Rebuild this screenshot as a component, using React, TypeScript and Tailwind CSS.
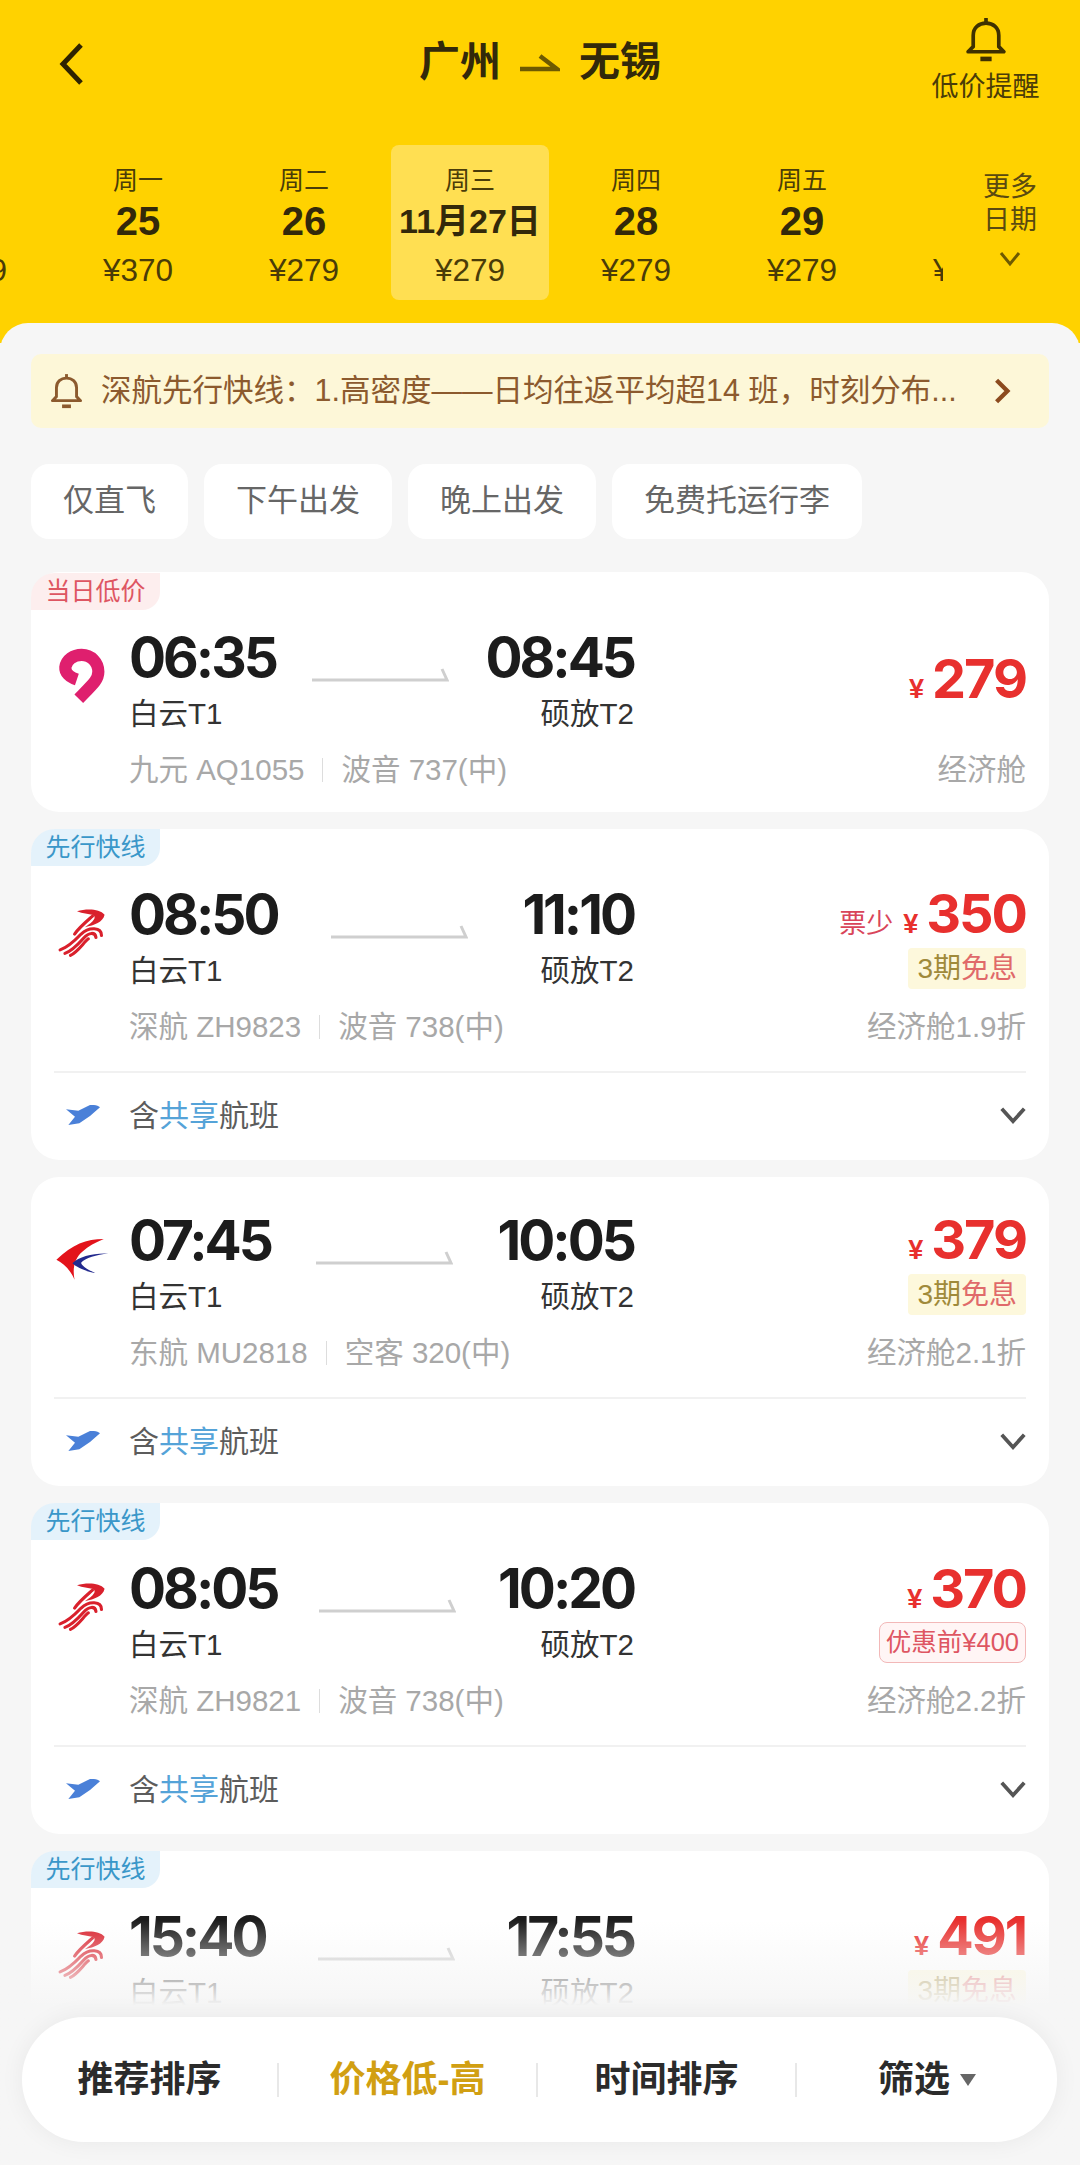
const DAYS = [
  { week: '周日', day: '24', price: '¥279' },
  { week: '周一', day: '25', price: '¥370' },
  { week: '周二', day: '26', price: '¥279' },
  { week: '周三', day: '11月27日', price: '¥279', active: true },
  { week: '周四', day: '28', price: '¥279' },
  { week: '周五', day: '29', price: '¥279' },
  { week: '周六', day: '30', price: '¥279' },
];

const CHIPS = ['仅直飞', '下午出发', '晚上出发', '免费托运行李'];

type Flight = {
  tag?: 'low' | 'fast';
  logo: 'nine' | 'shenzhen' | 'eastern';
  dep: string;
  arr: string;
  airline: string;
  plane: string;
  price: string;
  scarce?: boolean;
  badge?: 'free' | 'before';
  cabin: string;
  shared?: boolean;
};

const FLIGHTS: Flight[] = [
  { tag: 'low', logo: 'nine', dep: '06:35', arr: '08:45', airline: '九元 AQ1055', plane: '波音 737(中)', price: '279', cabin: '经济舱' },
  { tag: 'fast', logo: 'shenzhen', dep: '08:50', arr: '11:10', airline: '深航 ZH9823', plane: '波音 738(中)', price: '350', scarce: true, badge: 'free', cabin: '经济舱1.9折', shared: true },
  { logo: 'eastern', dep: '07:45', arr: '10:05', airline: '东航 MU2818', plane: '空客 320(中)', price: '379', badge: 'free', cabin: '经济舱2.1折', shared: true },
  { tag: 'fast', logo: 'shenzhen', dep: '08:05', arr: '10:20', airline: '深航 ZH9821', plane: '波音 738(中)', price: '370', badge: 'before', cabin: '经济舱2.2折', shared: true },
  { tag: 'fast', logo: 'shenzhen', dep: '15:40', arr: '17:55', airline: '深航 ZH9825', plane: '波音 738(中)', price: '491', badge: 'free', cabin: '经济舱2.9折', shared: true },
];

function BellIcon({ className, stroke }: { className: string; stroke: string }) {
  return (
    <svg viewBox="0 0 41 44" className={className} fill="none" stroke={stroke} strokeWidth="3.6" strokeLinejoin="round">
      <path d="M20.5 1v5" />
      <path d="M8 29V18C8 10.500 13.500 6 20.500 6S33 10.500 33 18v11l5 5H3z" />
      <path d="M15 41h11" strokeWidth="4.500" />
    </svg>
  );
}

function NineLogo() {
  return (
    <svg viewBox="80 70 156 186" className="w-[50px] h-[60px]">
      <path d="M142 174C118 166 105 152 106 136C109 112 132 97 157 97C186 97 209 120 209 150C209 174 195 186 148 234" fill="none" stroke="#df1f6e" strokeWidth="38" />
    </svg>
  );
}

function ShenzhenLogo() {
  return (
    <svg viewBox="85 50 145 150" className="w-[50px] h-[52px]">
      <path d="M143 62C170 54 208 54 223 72C218 94 194 102 166 108C192 92 200 80 190 73C175 69 160 69 143 62Z" fill="#d9202c" />
      <g fill="none" stroke="#d9202c" strokeLinecap="round">
        <path d="M188 76C170 92 150 108 136 128" strokeWidth="9" />
        <path d="M214 132C214 108 178 106 155 128C136 148 118 166 94 174" strokeWidth="9" />
        <path d="M198 138C196 122 178 122 162 140C146 158 130 176 108 184" strokeWidth="9" />
        <path d="M176 142C162 152 148 178 124 190" strokeWidth="9" />
      </g>
    </svg>
  );
}

function EasternLogo() {
  return (
    <svg viewBox="80 80 155 125" className="w-[54px] h-[44px]">
      <path d="M220 85C170 85 130 100 84 145C105 155 125 175 136 202C130 170 135 140 160 120C175 106 196 95 220 85Z" fill="#e3131b" />
      <path d="M233 127C190 125 150 135 130 155C142 166 165 178 196 183C170 171 156 161 155 153C166 140 200 131 233 127Z" fill="#232a8e" />
    </svg>
  );
}

function PlaneIcon() {
  return (
    <svg viewBox="78 45 102 60" className="w-[36px] h-[20px]">
      <path d="M78 58L115 62L150 45C162 44 175 46 180 52L150 78L118 100L85 105L105 80Z" fill="#4a80d8" />
    </svg>
  );
}

function FlightArrow() {
  return (
    <svg viewBox="0 0 137 16" className="w-[137px] h-[16px] mt-[42px] shrink-0" fill="none">
      <path d="M0 14H135L130 3" stroke="#cfcfcf" strokeWidth="3" />
    </svg>
  );
}

function Chevron({ className, stroke, points, width = 3 }: { className: string; stroke: string; points: string; width?: number }) {
  return (
    <svg viewBox="0 0 24 24" className={className} fill="none" stroke={stroke} strokeWidth={width}>
      <polyline points={points} />
    </svg>
  );
}

function FlightCard({ flight }: { flight: Flight }) {
  return (
    <div className="relative bg-white rounded-[28px] shrink-0">
      {flight.tag === 'low' && (
        <div className="absolute left-0 top-px h-[37px] w-[129px] flex items-center justify-center rounded-tl-[24px] rounded-br-[18px] bg-[#fdeeee] text-[25px] text-[#de5662]">
          当日低价
        </div>
      )}
      {flight.tag === 'fast' && (
        <div className="absolute left-0 top-0 h-[37px] w-[129px] flex items-center justify-center rounded-tl-[24px] rounded-br-[18px] bg-[#e4f2fb] text-[25px] text-[#3a97c9]">
          先行快线
        </div>
      )}

      <div className={`flex pb-[24px] pr-[23px] ${flight.tag ? 'pt-[52px]' : 'pt-[30px]'}`}>
        <div className="w-[98px] shrink-0 h-[104px] flex items-center justify-center pl-[4px]">
          {flight.logo === 'nine' && <NineLogo />}
          {flight.logo === 'shenzhen' && <ShenzhenLogo />}
          {flight.logo === 'eastern' && <EasternLogo />}
        </div>

        <div className="w-[505px] shrink-0">
          <div className="flex justify-between items-start h-[66px] font-['Inter',sans-serif] text-[55px] tracking-[-3px] leading-[66px] font-bold text-[#1c1c1c]">
            <span>{flight.dep}</span>
            <FlightArrow />
            <span>{flight.arr}</span>
          </div>
          <div className="flex justify-between mt-[6px] h-[36px] text-[29.5px] leading-[36px] text-[#333333]">
            <span>白云T1</span>
            <span>硕放T2</span>
          </div>
          <div className="flex items-center mt-[20px] h-[36px] text-[29.5px] leading-[36px] text-[#a8a8a8]">
            <span>{flight.airline}</span>
            <span className="w-px h-[24px] bg-[#dddddd] mx-[18px]" />
            <span>{flight.plane}</span>
          </div>
        </div>

        <div className="flex-1 flex flex-col items-end">
          <div className="h-[110px] flex flex-col items-end justify-center">
            <div className="flex items-baseline h-[62px] leading-[62px] text-[#e8302e]">
              {flight.scarce && <span className="text-[27px] text-[#d9455a] mr-[10px]">票少</span>}
              <span className="text-[27px] font-bold mr-[8px]">¥</span>
              <span className="font-['Inter',sans-serif] text-[54px] tracking-[-2px] font-bold">{flight.price}</span>
            </div>
            {flight.badge === 'free' && (
              <div className="mt-[3px] h-[41px] px-[9px] flex items-center bg-[#fdf8dc] rounded-[4px] text-[28px]">
                <span className="text-[#a08a3a]">3期</span>
                <span className="text-[#e06a6a]">免息</span>
              </div>
            )}
            {flight.badge === 'before' && (
              <div className="mt-[2px] h-[41px] px-[6px] flex items-center bg-[#fff5f5] border border-[#f2b8b8] rounded-[8px] text-[25.5px] text-[#de5662]">
                优惠前¥400
              </div>
            )}
          </div>
          <div className="mt-[18px] h-[36px] text-[29.5px] leading-[36px] text-[#a8a8a8]">{flight.cabin}</div>
        </div>
      </div>

      {flight.shared && (
        <div className="mx-[23px] mt-[2px] border-t-2 border-[#f1f1f1] h-[89px] flex items-center pb-[3px]">
          <div className="w-[75px] pl-[11px] shrink-0">
            <PlaneIcon />
          </div>
          <span className="text-[30px] text-[#5c5c5c]">
            含<span className="text-[#55a3d8]">共享</span>航班
          </span>
          <Chevron className="ml-auto w-[30px] h-[30px] -mr-[2px]" stroke="#555555" points="3,7 12,17 21,7" />
        </div>
      )}
    </div>
  );
}

export default function App() {
  return (
    <div className="relative h-[2165px] overflow-hidden bg-[#f6f6f6] font-['Liberation_Sans','Noto_Sans_CJK_SC',sans-serif]">
      {/* Header */}
      <div className="h-[343px] bg-[#ffd200] pt-[17px]">
        <div className="grid grid-cols-[1fr_auto_1fr] h-[128px]">
          <div className="pl-[58px] pt-[26px]">
            <svg viewBox="0 0 26 42" className="w-[26px] h-[42px]" fill="none" stroke="#2e2300" strokeWidth="5">
              <polyline points="23,2 5,21 23,40" />
            </svg>
          </div>
          <div className="flex items-center h-[92px] text-[41px] font-bold text-[#33290a]">
            <span>广州</span>
            <svg viewBox="0 0 40 18" className="w-[40px] h-[18px] mx-[19px]" fill="none" stroke="#6e5a00" strokeWidth="4.5">
              <path d="M0 15H37L20 2" />
            </svg>
            <span>无锡</span>
          </div>
          <div className="flex flex-col items-end pr-[40px]">
            <div className="w-[109px] flex flex-col items-center">
              <BellIcon className="w-[42px] h-[45px]" stroke="#3f3100" />
              <span className="mt-[9px] text-[27px] leading-[32px] text-[#4a3c08] whitespace-nowrap">低价提醒</span>
            </div>
          </div>
        </div>

        <div className="flex h-[155px]">
          <div className="w-[943px] shrink-0 overflow-hidden">
            <div className="flex -ml-[111px]">
              {DAYS.map(d => (
                <div key={d.week} className="w-[166px] shrink-0 flex justify-center">
                  <div className={`w-[158px] h-[155px] rounded-[8px] flex flex-col items-center ${d.active ? 'bg-[#ffdf52]' : ''}`}>
                    <span className="mt-[20px] h-[30px] leading-[30px] text-[25px] text-[#4a3c08]">{d.week}</span>
                    <span className={`mt-[4px] h-[44px] leading-[44px] font-bold text-[#33290a] whitespace-nowrap ${d.active ? 'text-[34px]' : 'text-[40px]'}`}>{d.day}</span>
                    <span className="mt-[9px] h-[36px] leading-[36px] text-[31.5px] text-[#4a3c08]">{d.price}</span>
                  </div>
                </div>
              ))}
            </div>
          </div>
          <div className="flex-1 flex flex-col items-center pt-[26px] pr-[3px] text-[27px] leading-[33px] text-[#5a4a10]">
            <span>更多</span>
            <span>日期</span>
            <Chevron className="w-[24px] h-[24px] mt-[9px]" stroke="#6e5a00" points="3,7 12,18 21,7" />
          </div>
        </div>
      </div>

      {/* Body */}
      <div className="-mt-[20px] rounded-t-[28px] bg-[#f6f6f6] px-[31px] pt-[31px]">
        <div className="h-[74px] rounded-[10px] bg-[#fdf7d8] flex items-center pl-[19px] pr-[40px] text-[30.5px] text-[#8c5a2e]">
          <BellIcon className="w-[33px] h-[36px] shrink-0" stroke="#8c5a2e" />
          <span className="ml-[18px] whitespace-nowrap">深航先行快线：1.高密度——日均往返平均超14 班，时刻分布...</span>
          <Chevron className="ml-auto w-[26px] h-[26px] -mr-[6px] shrink-0" stroke="#8c4a1e" points="7,2 17,12 7,22" width={4} />
        </div>

        <div className="flex gap-[16px] mt-[36px]">
          {CHIPS.map(c => (
            <div key={c} className="h-[75px] px-[32px] rounded-[18px] bg-white flex items-center text-[31px] text-[#666666]">
              {c}
            </div>
          ))}
        </div>

        <div className="flex flex-col gap-[17px] mt-[33px]">
          {FLIGHTS.map(f => (
            <FlightCard key={f.dep} flight={f} />
          ))}
        </div>
      </div>

      {/* Fade under the sort bar */}
      <div className="absolute inset-x-0 bottom-0 h-[245px] bg-linear-to-b from-[#f6f6f600] to-[#f6f6f6] to-35%" />

      {/* Sort bar */}
      <div className="absolute left-[22px] right-[23px] bottom-[23px] h-[125px] rounded-[62px] bg-white shadow-[0_0_24px_rgba(0,0,0,0.06)] flex items-center text-[36px] font-bold text-[#2b2b2b]">
        <div className="w-[257px] h-[34px] border-r-2 border-[#e8e8e8] flex items-center justify-center">推荐排序</div>
        <div className="w-[259px] h-[34px] border-r-2 border-[#e8e8e8] flex items-center justify-center text-[#d19f12]">价格低-高</div>
        <div className="w-[259px] h-[34px] border-r-2 border-[#e8e8e8] flex items-center justify-center">时间排序</div>
        <div className="flex-1 h-[34px] flex items-center justify-center">
          筛选
          <span className="ml-[10px] w-0 h-0 border-x-[8px] border-t-[12px] border-x-transparent border-t-[#666666]" />
        </div>
      </div>
    </div>
  );
}
